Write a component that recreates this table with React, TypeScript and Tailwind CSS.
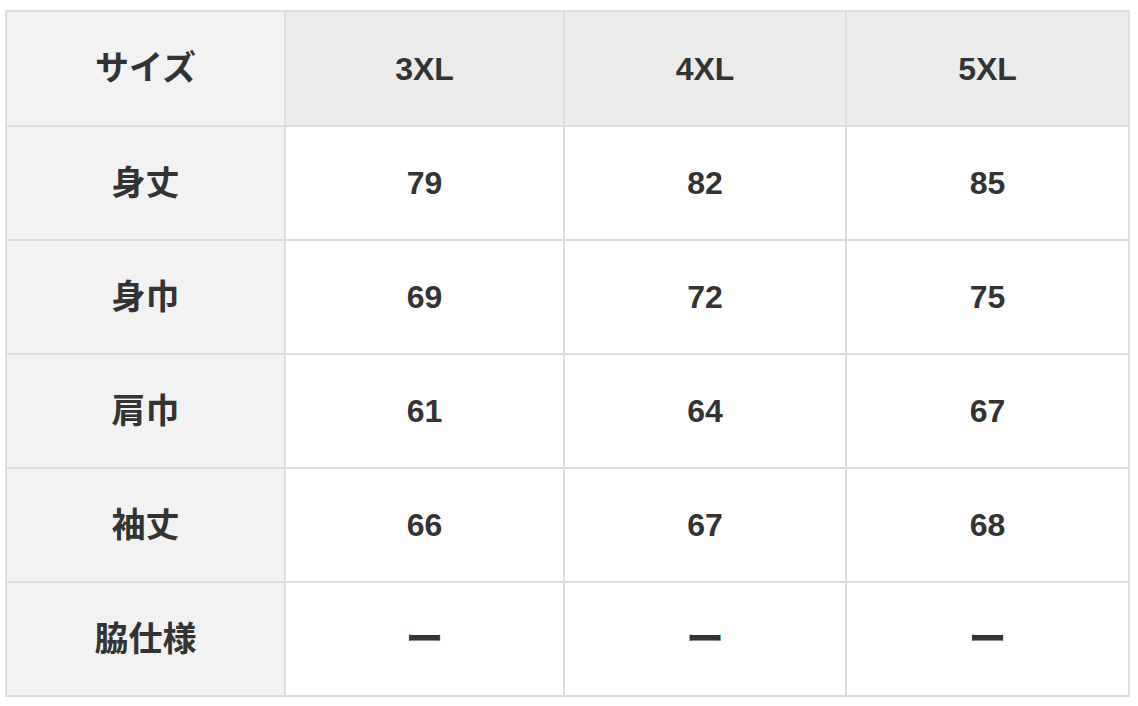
const headers = ["3XL", "4XL", "5XL"];

const rows: { label: string; values: string[] }[] = [
  { label: "身丈", values: ["79", "82", "85"] },
  { label: "身巾", values: ["69", "72", "75"] },
  { label: "肩巾", values: ["61", "64", "67"] },
  { label: "袖丈", values: ["66", "67", "68"] },
  { label: "脇仕様", values: ["ー", "ー", "ー"] },
];

const font = {
  fontFamily: '"Liberation Sans", "Noto Sans CJK JP", sans-serif',
};

export default function App() {
  return (
    <div className="min-h-[706px] w-[1138px] bg-white pl-[5px] pt-[10px]" style={font}>
      <table className="w-[1123px] table-fixed border-collapse border-2 border-[#dddddd] text-[32px] font-bold text-[#333333]">
        <colgroup>
          <col className="w-[279px]" />
          <col className="w-[279px]" />
          <col className="w-[282px]" />
          <col className="w-[283px]" />
        </colgroup>
        <thead>
          <tr className="h-[115px]">
            <th className="border-2 border-[#dddddd] bg-[#f2f2f2] text-center align-middle text-[34px]">
              サイズ
            </th>
            {headers.map((h) => (
              <th
                key={h}
                className="border-2 border-[#dddddd] bg-[#ebebeb] text-center align-middle"
              >
                {h}
              </th>
            ))}
          </tr>
        </thead>
        <tbody>
          {rows.map((row) => (
            <tr key={row.label} className="h-[114px]">
              <th className="border-2 border-[#dddddd] bg-[#f2f2f2] text-center align-middle text-[34px]">
                {row.label}
              </th>
              {row.values.map((v, i) => (
                <td
                  key={i}
                  className={
                    v === "ー"
                      ? "border-2 border-[#dddddd] bg-white text-center align-middle text-[38px]"
                      : "border-2 border-[#dddddd] bg-white text-center align-middle"
                  }
                >
                  {v}
                </td>
              ))}
            </tr>
          ))}
        </tbody>
      </table>
    </div>
  );
}
